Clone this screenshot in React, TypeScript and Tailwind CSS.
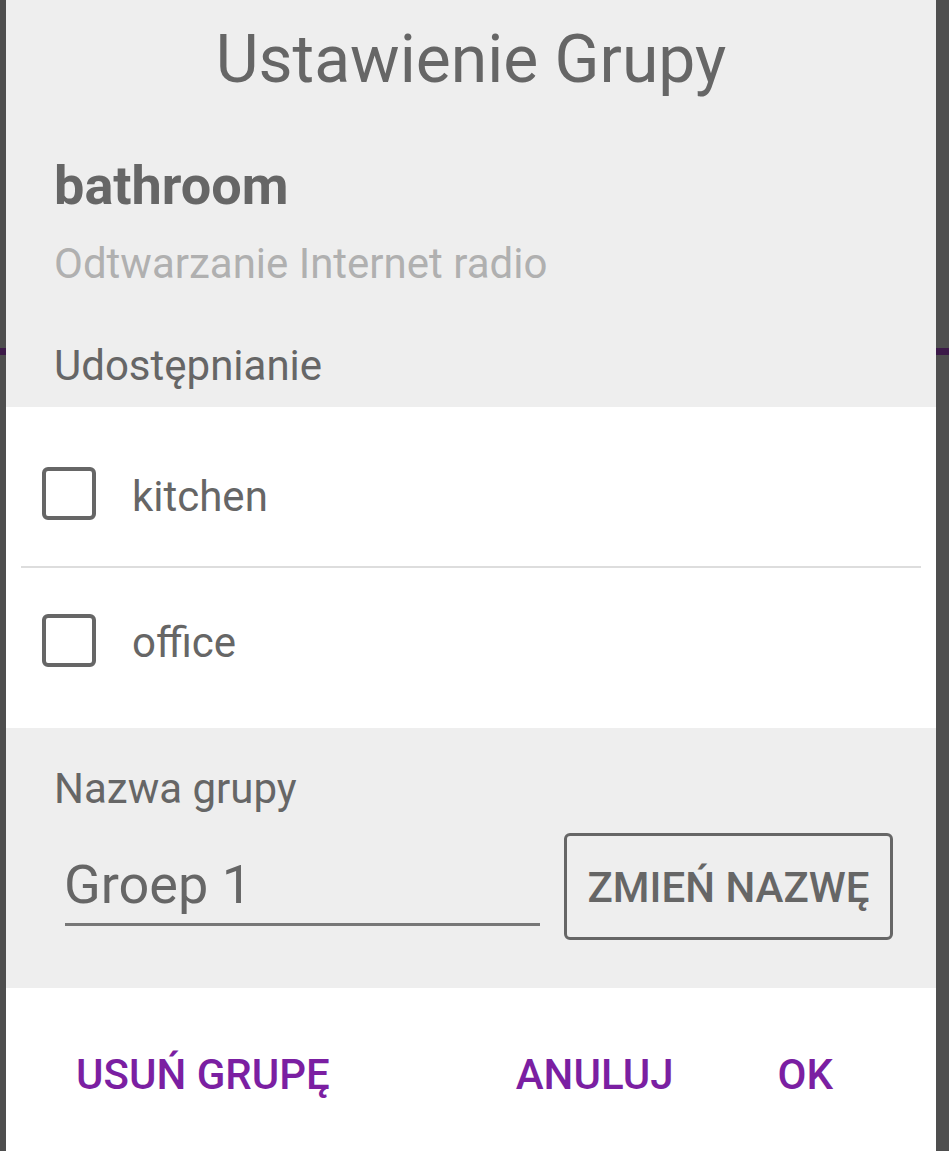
import React from "react";

const font = { fontFamily: "Roboto, 'Noto Sans', Arial, sans-serif" };

function Box() {
  return <div className="w-[54px] h-[53px] shrink-0 rounded-[6px] border-[4px] border-[#666666]" />;
}

export default function App() {
  return (
    <div className="relative w-[949px] h-[1151px] overflow-hidden bg-[#4e4e4e]" style={font}>
      {/* background app behind the dialog */}
      <div className="h-[348px]" />
      <div className="h-[7px] bg-[#3c1a48]" />

      {/* dialog */}
      <div className="absolute top-0 bottom-0 left-[6px] right-[13px] flex flex-col">
        {/* header */}
        <div className="bg-[#eeeeee] h-[407px] pt-[27px] px-[48px] flex flex-col">
          <div className="text-center text-[66px] leading-none text-[#666666] -ml-[48px] -mr-[48px]">Ustawienie Grupy</div>
          <div className="mt-[66px] text-[54px] leading-none font-bold text-[#666666]">bathroom</div>
          <div className="mt-[30px] text-[42px] leading-none text-[#b0b0b0]">Odtwarzanie Internet radio</div>
          <div className="mt-[60px] text-[42px] leading-none text-[#666666]">Udostępnianie</div>
        </div>

        {/* list */}
        <div className="bg-white h-[321px] flex flex-col">
          <div className="h-[159px] pt-[60px] pl-[36px] flex items-start">
            <Box />
            <div className="ml-[36px] mt-[9px] text-[42px] leading-none text-[#666666]">kitchen</div>
          </div>
          <div className="h-[2px] mx-[15px] bg-[#dddddd]" />
          <div className="h-[160px] pt-[46px] pl-[36px] flex items-start">
            <Box />
            <div className="ml-[36px] mt-[8px] text-[42px] leading-none text-[#666666]">office</div>
          </div>
        </div>

        {/* name */}
        <div className="bg-[#eeeeee] h-[260px] pt-[40px] pl-[48px] pr-[43px] flex flex-col">
          <div className="text-[42px] leading-none text-[#666666]">Nazwa grupy</div>
          <div className="mt-[23px] flex items-start">
            <div className="ml-[11px] w-[475px] pt-[25px] pb-[11px] border-b-[3px] border-[#777777]">
              <div className="text-[54px] leading-none text-[#666666] -ml-[1px]">Groep 1</div>
            </div>
            <div className="ml-[24px] flex-1 h-[107px] rounded-[6px] border-[3px] border-[#666666] flex items-center justify-center">
              <span className="text-[42px] leading-none font-medium text-[#666666] mt-[2px]">ZMIEŃ NAZWĘ</span>
            </div>
          </div>
        </div>

        {/* footer */}
        <div className="bg-white flex-1 pt-[66px] pl-[70px] pr-[103px] flex items-start">
          <span className="text-[42px] leading-none font-medium text-[#7b1fa2]">USUŃ GRUPĘ</span>
          <div className="flex-1" />
          <span className="text-[42px] leading-none font-medium text-[#7b1fa2]">ANULUJ</span>
          <span className="ml-[104px] text-[42px] leading-none font-medium text-[#7b1fa2]">OK</span>
        </div>
      </div>
    </div>
  );
}
